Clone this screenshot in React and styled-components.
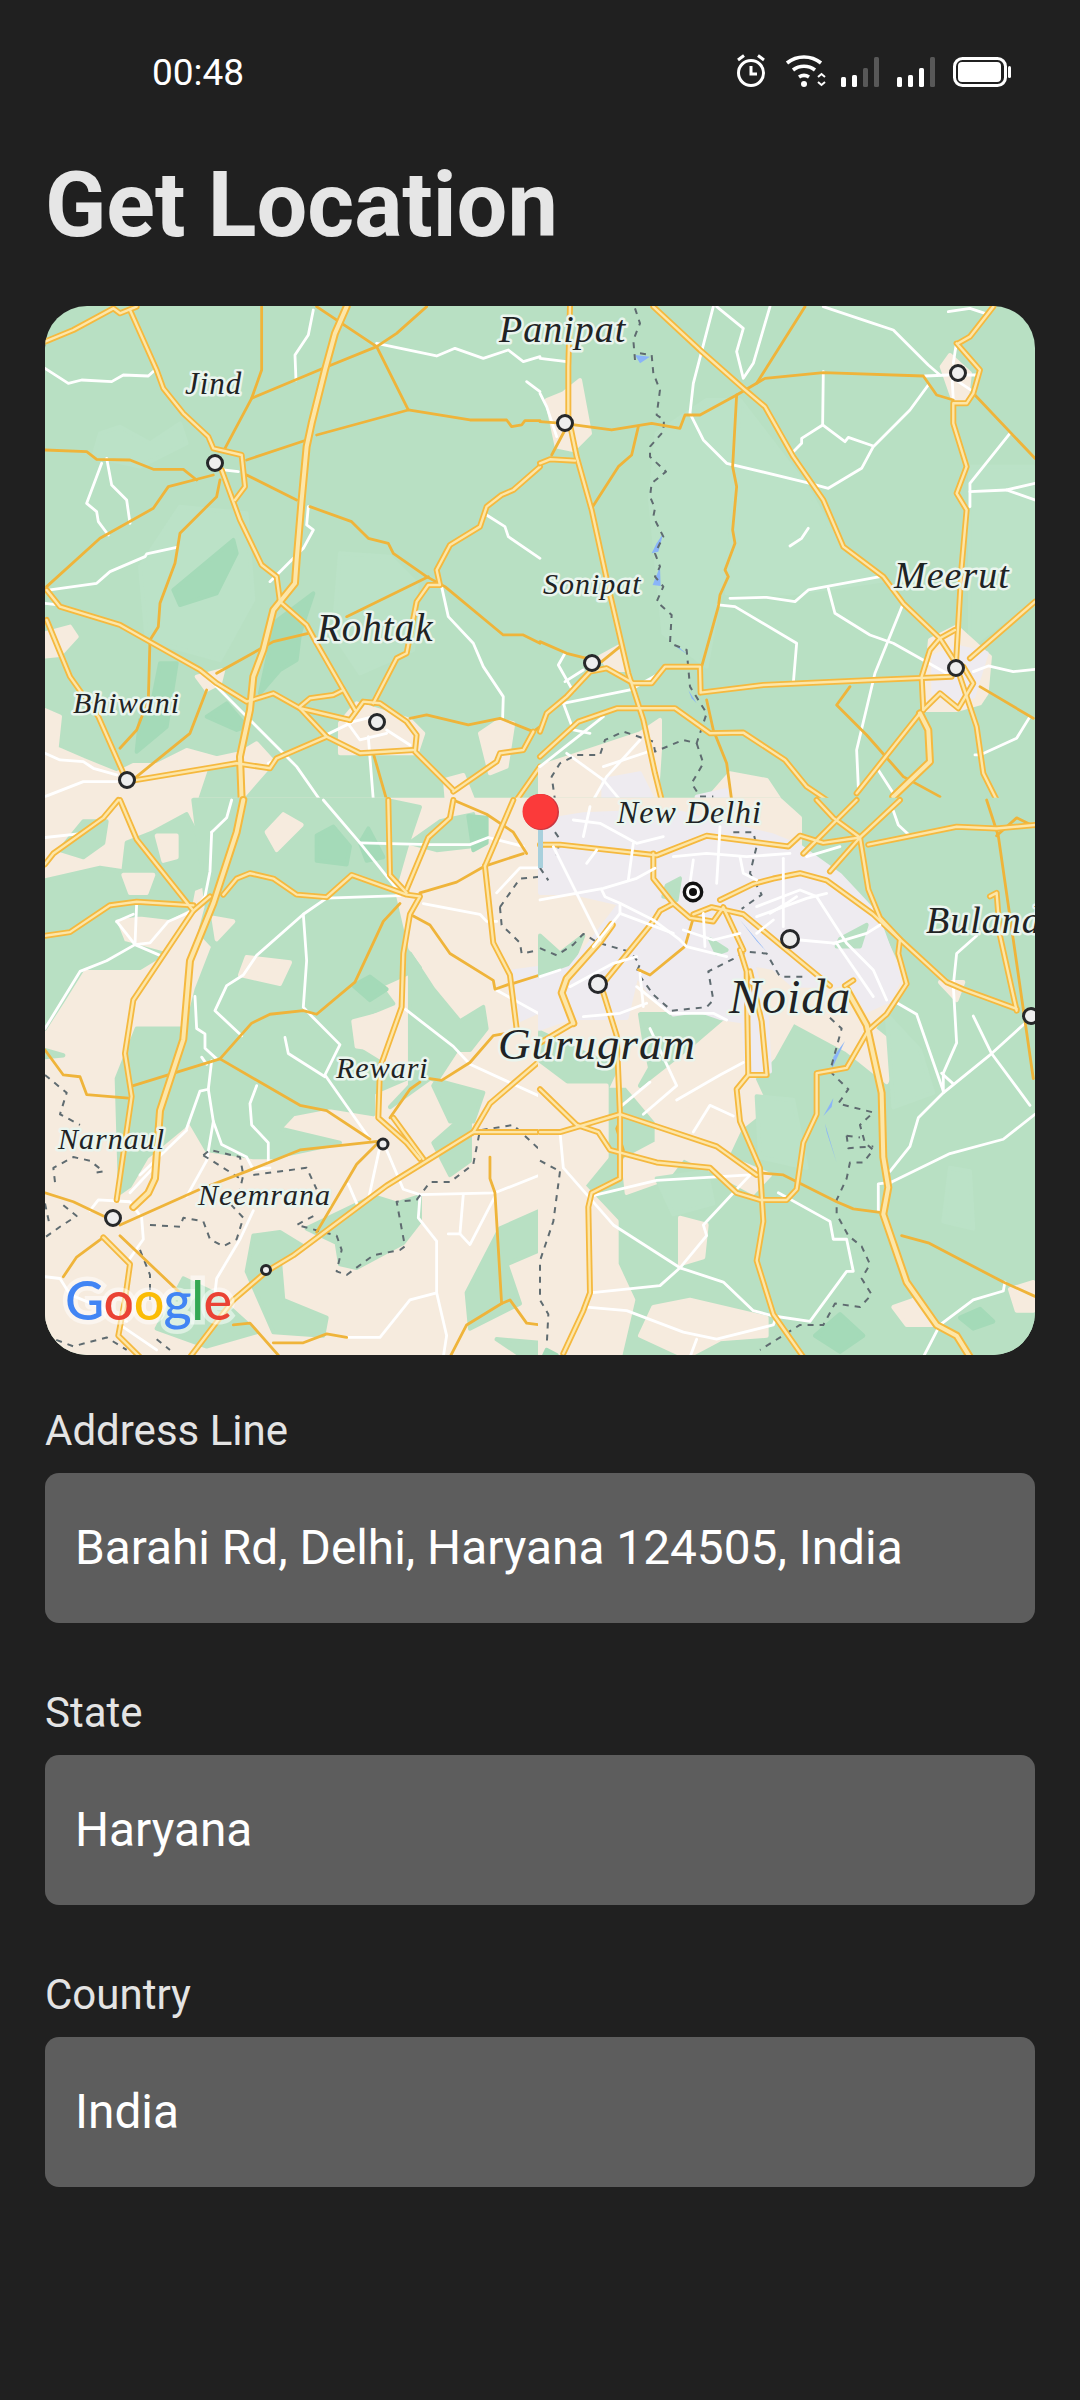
import React from 'react'
import styled, { createGlobalStyle } from 'styled-components'

const GlobalStyle = createGlobalStyle`
  html, body {
    margin: 0;
    padding: 0;
    background: #202020;
  }
`

const Screen = styled.div`
  width: 1080px;
  height: 2400px;
  box-sizing: border-box;
  padding: 0 45px;
  background: #202020;
  font-family: Roboto, "Noto Sans", sans-serif;
  overflow: hidden;
`

const StatusBar = styled.div`
  height: 144px;
  display: flex;
  align-items: center;
  justify-content: space-between;
  padding: 0 5px 0 107px;
`

const Clock = styled.span`
  font-size: 37px;
  color: #fff;
`

const StatusIcons = styled.svg`
  display: block;
`

const Title = styled.h1`
  margin: 0;
  height: 162px;
  font-size: 90px;
  line-height: 124px;
  font-weight: 700;
  color: #e6e6e6;
`

const MapCard = styled.div`
  width: 990px;
  height: 1049px;
  border-radius: 42px;
  overflow: hidden;
  background: #b8e0c3;
`

const MapSvg = styled.svg`
  display: block;
`

const Form = styled.div`
  display: flex;
  flex-direction: column;
  gap: 60px;
  padding-top: 46px;
`

const Field = styled.div`
  display: flex;
  flex-direction: column;
  gap: 12px;
`

const Label = styled.label`
  font-size: 42px;
  line-height: 60px;
  color: #e4e4e4;
`

const Value = styled.div`
  height: 150px;
  box-sizing: border-box;
  display: flex;
  align-items: center;
  padding: 0 30px;
  border-radius: 14px;
  background: #5d5d5d;
  font-size: 47.8px;
  color: #fff;
`

const GREEN = '#b8e0c3'
const GREEN_DARK = '#a4dab8'
const GREEN_LIGHT = '#bbe2c7'
const BEIGE = '#f6ebde'
const CITY = '#eeebf0'

// page coordinates come from zooms, so each quadrant keeps its own scale
const QUADS = {
  nw: 'translate(40 300) scale(0.3333 0.3333)',
  ne: 'translate(540 300) scale(0.3333 0.3333)',
  sw: 'translate(40 800) scale(0.3333 0.3571)',
  se: 'translate(540 800) scale(0.3333 0.3571)',
  delhi: 'translate(540 800) scale(0.3333 0.3333)',
}

const AREAS = {
  nw: [
    [GREEN_LIGHT, '300,800 420,620 620,640 640,900 540,1080 320,1020'],
    [GREEN_LIGHT, '900,760 1050,770 1130,850 1120,1050 960,1120 880,1000'],
    [GREEN_LIGHT, '180,400 240,380 330,430 420,370 440,430 300,500 160,470'],
    [BEIGE, '15,1000 90,980 110,1010 60,1065 15,1070'],
    [BEIGE, '15,1230 60,1250 50,1345 130,1380 230,1420 280,1395 350,1395 440,1350 530,1375 600,1360 650,1330 700,1385 600,1500 15,1500'],
    [BEIGE, '470,1130 550,1110 540,1150 500,1170'],
    [BEIGE, '900,1270 950,1210 1110,1260 1150,1300 1130,1360 900,1360'],
    [BEIGE, '1320,1300 1380,1260 1420,1270 1400,1400 1350,1420'],
    [BEIGE, '1215,1440 1270,1425 1300,1500 1220,1500'],
    [GREEN, '510,1410 600,1400 600,1500 480,1500'],
    [GREEN_DARK, '400,870 580,720 590,760 530,880 420,915'],
    [GREEN_DARK, '700,970 820,880 780,1000 770,1080 720,1110 660,1180 690,1040'],
    [GREEN_DARK, '360,1090 410,1090 380,1280 290,1355 300,1260 330,1240'],
    [GREEN_DARK, '500,1250 560,1210 620,1280 590,1290'],
  ],
  ne: [
    [GREEN_LIGHT, '500,300 590,300 580,700 540,880 500,1100 370,1000 330,600 350,400'],
    [GREEN_LIGHT, '600,300 800,560 900,740 1040,840 760,880 560,880'],
    [GREEN_LIGHT, '1290,500 1480,500 1480,900 1290,1040'],
    [BEIGE, '20,300 70,280 120,240 150,400 100,450 50,440'],
    [BEIGE, '180,1070 235,1040 255,1110 210,1110'],
    [BEIGE, '1205,200 1230,165 1290,220 1280,310 1240,300'],
    [BEIGE, '1170,1020 1250,980 1350,1070 1340,1180 1320,1210 1250,1230 1150,1230'],
    [CITY, '1180,1070 1250,1040 1340,1060 1300,1190 1240,1210 1180,1180'],
    [BEIGE, '0,1400 300,1300 360,1260 360,1350 350,1500 0,1500'],
    [BEIGE, '500,1500 570,1420 680,1440 720,1500'],
    [CITY, '190,1440 300,1420 340,1500 190,1500'],
    [CITY, '470,1490 560,1470 560,1500 470,1500'],
  ],
  sw: [
    [BEIGE, '15,0 1500,0 1500,1560 15,1560'],
    [GREEN, '15,225 180,190 250,200 260,120 340,90 440,40 490,130 540,220 460,250 450,300 390,330 300,320 220,330 250,400 370,430 300,470 130,470 70,560 15,640'],
    [GREEN, '130,60 200,60 190,120 130,160 60,140'],
    [GREEN, '460,0 1040,0 1140,20 1100,130 1060,260 1100,420 1140,470 1020,520 1060,570 930,620 960,700 1100,780 1000,820 1000,880 870,860 760,880 720,920 900,960 700,1000 640,1000 500,980 450,900 320,1000 270,1080 240,1100 230,780 290,640 330,640 440,640 470,530 520,410 480,370 500,300'],
    [BEIGE, '680,90 730,40 785,70 710,140'],
    [BEIGE, '620,440 750,455 720,515 600,490'],
    [BEIGE, '530,390 580,340 520,330'],
    [BEIGE, '350,100 410,100 410,160 370,170'],
    [BEIGE, '250,210 340,210 320,260 270,260'],
    [BEIGE, '940,620 1020,600 1090,650 1030,700 950,690'],
    [GREEN, '1110,430 1180,530 1260,620 1330,580 1340,640 1290,700 1250,700 1180,800 1230,900 1300,900 1330,820 1170,780 1050,860 1110,800'],
    [GREEN, '15,700 70,715 15,720'],
    [GREEN, '640,1220 720,1210 790,1250 720,1290 730,1400 860,1450 850,1500 700,1490 620,1320'],
    [GREEN, '1070,1130 1140,1110 1140,1180 1090,1240 950,1310 900,1300 890,1240 800,1200 1000,1110'],
    [GREEN, '1280,1380 1380,1200 1500,1150 1500,1260 1400,1300 1440,1410 1290,1480'],
    [GREEN, '350,1480 430,1340 520,1380 650,1490 500,1530'],
    [GREEN, '1290,870 1180,960 1230,1050 1290,1010'],
    [GREEN, '1110,120 1200,60 1300,40 1290,130 1190,140'],
    [GREEN, '1370,1510 1500,1520 1500,1560 1450,1560'],
    [CITY, '1420,480 1500,470 1500,590 1430,620'],
    [GREEN_DARK, '830,100 880,75 930,130 920,180 830,170'],
    [GREEN_DARK, '960,120 985,80 1030,160 980,170'],
    [GREEN_DARK, '1285,45 1340,50 1340,120 1300,140'],
    [GREEN_DARK, '940,520 990,495 1040,530 990,560'],
  ],
  se: [
    [GREEN, '0,0 1500,0 1500,1560 0,1560'],
    [BEIGE, '0,0 720,0 780,50 780,130 1000,320 1100,520 1000,640 1080,700 1040,790 920,700 760,620 700,720 640,780 680,860 600,920 560,1000 690,1050 640,1100 520,1040 430,1000 380,1060 260,1100 250,1010 350,960 350,900 260,800 0,800'],
    [GREEN, '0,380 60,430 130,380 80,500 0,520'],
    [GREEN, '390,470 440,460 500,480 500,590 400,590 320,520'],
    [GREEN, '300,600 400,600 550,610 450,690 300,800 330,750 310,660'],
    [GREEN, '230,750 190,830 100,800 0,730 0,650 160,720'],
    [CITY, '0,60 130,40 400,30 480,50 700,100 780,130 900,210 1010,320 1080,500 1050,560 980,590 930,510 880,520 760,520 700,470 640,460 680,600 690,760 620,760 610,620 540,610 480,590 400,600 330,540 290,490 260,610 210,610 90,610 0,640 0,500 90,470 150,400 240,290 100,260 0,260'],
    [GREEN, '510,390 560,420 530,430'],
    [GREEN, '380,240 420,220 410,280 370,270'],
    [GREEN, '900,390 980,350 960,410 890,410'],
    [BEIGE, '0,800 200,800 200,1000 130,1080 230,1180 230,1300 280,1400 240,1560 0,1560'],
    [BEIGE, '420,850 520,870 540,960 480,960'],
    [BEIGE, '340,1420 450,1400 680,1450 680,1500 540,1510 440,1560 300,1500'],
    [BEIGE, '420,1170 500,1190 490,1280 420,1300'],
    [BEIGE, '1060,1420 1120,1400 1180,1470 1100,1470'],
    [BEIGE, '1410,1370 1480,1350 1480,1430 1430,1430'],
    [BEIGE, '1200,510 1270,510 1250,560'],
    [GREEN_LIGHT, '350,1060 500,1040 520,1130 400,1160'],
    [GREEN_LIGHT, '650,830 760,840 800,1030 660,1000'],
    [GREEN_LIGHT, '1040,600 1140,700 1180,820 1060,860'],
    [GREEN_LIGHT, '1230,1030 1290,1040 1300,1200 1210,1180'],
    [GREEN_DARK, '825,1500 900,1440 970,1500 900,1545'],
    [GREEN_DARK, '1260,1450 1320,1425 1360,1460 1300,1480'],
    [GREEN_DARK, '20,1540 50,1555 10,1560'],
  ],
  delhi: [],
}

const ROADS = {
  nw: {
    major: [
      '920,20 885,100 855,210 815,370 800,440 785,600 770,780 765,850 700,930 670,1050 640,1130 630,1230 600,1370 605,1500',
    ],
    wide: [
      '270,30 350,210 370,265 430,340 505,410 520,445 605,465 615,560 585,600',
      '545,510 600,660 665,795 710,830 720,905 800,975 830,1030 945,1230',
      '15,125 100,90 220,25 240,40 290,20',
      '20,870 60,920 240,975 480,1110 530,1150 620,1205 700,1180 780,1225 860,1310 960,1360 1120,1350',
      '780,1225 930,1260',
      '780,1220 810,1195 880,1185 910,1170',
      '930,1260 970,1205 1020,1210 1100,1265 1130,1305 1125,1355 1240,1470',
      '20,960 90,1130 175,1250 250,1420',
      '260,1445 590,1390 690,1405 710,1375 860,1310',
      '1000,1210 1070,1075 1100,1060 1130,905 1165,855 1200,855 1190,810 1230,735 1320,680 1340,620 1385,585 1420,570 1500,500',
      '1480,1295 1450,1350 1380,1360 1370,1385 1240,1475',
      '1500,1400 1430,1500',
    ],
    thin: [
      '665,20 665,210 635,295 555,445',
      '635,295 850,205 1010,140 1070,100 1160,20',
      '830,20 1010,140 1105,330 830,405',
      '800,420 620,480',
      '1105,330 1290,360 1400,360 1415,380 1445,375 1455,362 1500,362',
      '15,450 140,455 170,478 270,480 340,508 430,508 470,540',
      '20,860 180,715 340,625 385,560 520,525',
      '540,540 530,590 420,700 405,790 360,910 355,980 330,1020 325,1200 290,1290 240,1345',
      '620,525 770,600',
      '810,620 935,665 985,715 1045,730 1060,760 1160,830 1215,860 1390,1005 1450,1005 1500,1030',
      '1165,830 920,950',
      '805,1000 700,1025 530,1120',
      '500,1170 450,1300 290,1430',
      '1110,1255 1160,1245 1285,1275 1380,1255 1480,1295 1500,1280',
      '1000,1360 1040,1500',
    ],
    minor: [
      '820,30 805,105 765,165 768,240',
      '1010,130 1190,168 1245,145 1330,175 1405,150 1450,185 1500,170',
      '15,205 85,250 125,240 215,245 250,225 325,228 345,210',
      '200,475 215,555 260,600 270,670',
      '185,490 140,610 170,635 175,665 205,705',
      '30,870 170,850 210,815 315,770 320,762 410,742',
      '805,620 800,675 820,690 790,745 720,815 690,845',
      '490,1120 640,1270 770,1400 840,1500',
      '15,1360 60,1380 130,1385 160,1405 230,1425',
      '15,1490 130,1445 230,1445',
      '1340,645 1395,680 1405,710 1500,775',
      '1205,860 1225,950 1300,1030 1330,1100 1390,1190 1388,1255',
      '1460,245 1500,275',
      '920,1265 960,1320 1040,1300',
      '685,1390 940,1265 1000,1250',
      '1040,1290 1110,1335',
      '985,1310 1000,1500',
      '550,510 595,515',
      '15,910 55,915',
    ],
    dashed: [],
    water: [],
  },
  ne: {
    major: [
      '1140,1240 1165,1290 1170,1385 1060,1490',
    ],
    wide: [
      '340,20 480,150 610,265 675,320 760,470 850,600 910,740 1030,830 1090,910 1200,1015 1245,1085',
      '90,20 85,200 85,350 110,470 155,630 205,860 265,1120 310,1260 345,1420 365,1500',
      '1250,130 1320,210 1300,280 1280,310 1240,310 1240,370 1280,500 1250,580 1280,630 1265,800 1248,1090',
      '1360,20 1290,110 1255,130',
      '0,490 30,478 105,482',
      '0,1295 20,1240 80,1190 150,1115 200,1105 280,1150 335,1150 375,1100 480,1100 482,1178 670,1155 1000,1140 1235,1130',
      '0,1370 115,1265 230,1225 405,1225 510,1300 610,1298 735,1380 800,1460 860,1500',
      '1140,1240 950,1480',
      '1150,1230 1145,1130 1170,1050 1200,1015 1245,990',
      '1150,1230 1200,1180 1255,1225 1300,1150 1270,1100',
      '1290,1075 1485,905',
      '1260,1130 1310,1280 1330,1420 1370,1500',
    ],
    thin: [
      '1320,1160 1480,1255',
      '0,1025 80,1060 140,1075',
      '185,1085 240,1040',
      '0,365 70,370 215,390 335,370 420,385 435,345 480,345 590,285 650,250 675,235 850,218 1150,228 1190,285 1240,300',
      '650,250 795,20',
      '590,285 578,500 590,560 578,690 585,730 555,810 565,830 540,885 535,920 485,1100',
      '295,380 275,465 235,500 155,625',
      '35,465 75,390',
      '1300,280 1485,475',
      '930,1160 890,1215 980,1305 1090,1430 1200,1490',
      '500,1200 520,1290 560,1390 575,1500',
    ],
    minor: [
      '520,20 460,250 450,340 490,420 560,490 810,550 865,565 965,505 1000,440 1110,330 1165,255',
      '530,20 610,85 590,155 610,235 640,190 690,20',
      '850,215 848,375 785,415 785,430 760,455',
      '848,375 915,425 925,412 1000,438',
      '850,20 1000,70 1060,90 1165,195 1200,225',
      '1155,228 1225,225',
      '1225,35 1290,25 1335,40',
      '1235,210 1240,300',
      '1250,125 1240,190',
      '1255,245 1300,275',
      '1280,225 1310,225',
      '1410,400 1290,550 1290,620',
      '1290,575 1400,570 1485,600',
      '1400,570 1485,550',
      '805,685 785,715 750,738',
      '570,895 680,892 765,905 805,870 1020,830',
      '865,865 885,940 990,1005 1060,1030 1220,1120',
      '1090,910 1005,1120 950,1350 955,1460',
      '535,915 585,920 770,1030 760,1150',
      '1300,1115 1345,1098 1420,1115 1485,1108',
      '1470,1250 1430,1315 1320,1365 1305,1365',
      '1015,1410 1060,1480',
      '0,175 80,185',
      '0,280 20,320 50,410',
      '75,1060 55,1095 100,1175',
      '75,1145 130,1110',
      '70,1210 270,1170 360,1120',
      '70,1210 100,1290 150,1300',
      '0,1400 190,1250',
      '300,1320 200,1430 160,1500',
      '80,1360 190,1440 240,1500',
      '190,1400 340,1350',
    ],
    dashed: [
      '285,25 300,70 280,120 285,180',
      '300,160 335,165 340,220 360,270 350,345 372,360 370,395 330,440 330,470 378,515 335,550 330,590 345,625 340,650 370,710 345,760 360,800 345,830 370,860 350,905 395,945 390,1030 440,1050 450,1160 500,1240 470,1330 430,1320 345,1355 340,1325 250,1295 195,1320 180,1365 110,1365 60,1390 35,1430 45,1500',
      '470,1330 490,1390 455,1450 480,1490 520,1490',
    ],
    water: [
      '285,165 330,170 300,190',
      '370,700 355,755 335,760 350,730',
      '360,800 362,858 338,855',
      '400,1035 445,1065 420,1045',
      '445,1170 470,1210 455,1195',
    ],
  },
  sw: {
    major: [
      '610,0 590,90 520,290 450,450 430,670 360,870 345,1060 325,1100 280,1140',
    ],
    wide: [
      '240,0 290,110 460,310 510,270',
      '460,310 280,560 255,710 275,830 230,1120',
      '15,380 90,370 210,295 290,285 460,295',
      '15,180 40,150 130,90 190,50 235,0',
      '550,265 590,220 630,205 700,220 770,265 860,272 935,210 1100,265 1140,270 1110,320 1090,430 1085,580 1020,750 1015,890 1100,960 1140,1005',
      '1045,0 1050,210 1100,260',
      '1100,250 1165,105 1230,50 1240,0',
      '1335,185 1420,0',
      '1335,185 1360,400 1410,490 1430,640',
      '580,1400 680,1320 760,1275 1040,1080 1300,930 1500,930',
      '1300,930 1350,850 1500,730',
      '1060,890 1150,1005',
      '190,1225 270,1300 255,1400 235,1500 300,1560',
      '450,1560 580,1400',
    ],
    thin: [
      '1140,260 1250,230 1335,185 1450,150',
      '1240,0 1340,40 1420,90 1460,150',
      '1120,325 1170,350 1230,430 1360,505 1365,530 1410,515',
      '1415,515 1500,490',
      '280,800 540,725 635,625 690,600 790,590 830,600 945,510 1030,340 1080,290',
      '540,725 780,855 860,870 990,950',
      '15,700 70,770 120,775 140,825 265,835',
      '240,1190 480,1090 620,1040 780,980 1020,955',
      '1020,955 950,1020 830,1210',
      '1050,890 1110,810 1140,790',
      '1170,780 1205,785 1290,735 1360,660 1420,650',
      '15,1100 100,1125 190,1165',
      '190,1225 110,1280 70,1335',
      '240,1220 420,1380',
      '1350,1000 1350,1060 1365,1100 1385,1410 1280,1470 1230,1560',
      '1385,1410 1410,1400 1460,1465 1500,1470',
      '580,1470 630,1465 720,1560',
      '700,1520 790,1520 860,1495 920,1505',
    ],
    minor: [
      '15,105 115,95',
      '15,640 120,480 200,450 285,405 360,435',
      '285,405 330,400 385,340 470,305',
      '290,290 285,405',
      '230,340 285,405',
      '280,320 230,340',
      '515,90 510,200 495,270 470,300',
      '575,0 560,50 515,90',
      '850,0 960,120 1080,260',
      '960,120 1170,125 1290,125 1345,105 1450,130',
      '1080,268 860,275 790,320 650,435 610,490 560,520 525,590 605,660',
      '790,320 800,450 790,580 820,610 900,685 855,770 990,950',
      '735,665 745,710 855,775',
      '465,550 470,640 495,655 495,695 530,725',
      '485,720 500,740',
      '515,730 505,810 520,900 545,965 620,1000 640,1035 690,1030',
      '505,810 480,815 440,920',
      '520,900 500,1010 440,1110',
      '650,800 630,850 635,910 685,960 685,1010',
      '640,1150 600,1230 530,1340 525,1380',
      '1095,585 1240,690 1290,740 1500,830',
      '1040,980 1090,1090 1140,1105 1365,1100 1500,1050',
      '1020,970 985,1120',
      '925,1075 955,1140',
      '1140,1110 1135,1170 1190,1235 1190,1380 1220,1500 1210,1560',
      '1190,1380 1110,1400 1020,1505 920,1505',
      '1270,1105 1260,1215 1290,1245 1365,1110',
      '1225,1215 1260,1215',
      '1150,290 1320,320 1340,340 1370,340',
      '1365,530 1500,600',
      '1370,260 1440,190 1500,190',
      '15,1335 60,1340 90,1385 180,1420 260,1460',
      '240,1470 350,1540',
      '150,1150 175,1120 270,1125 305,1170 310,1230 265,1290',
      '440,925 300,1050',
      '350,1020 270,1100',
    ],
    dashed: [
      '15,770 80,820 60,880 120,910',
      '45,1070 40,1030 100,1000 150,1010 190,1040 155,1045',
      '70,1135 110,1165 60,1195 15,1225',
      '15,1130 30,1195',
      '300,1260 330,1330 330,1400',
      '330,1190 420,1195 430,1170 490,1180 510,1230 550,1250 590,1230 610,1170 570,1130',
      '490,995 510,980 600,1000 610,1050 600,1090',
      '490,995 550,1030 600,1060',
      '640,1050 800,1030 830,1090',
      '820,1165 770,1190 890,1220 905,1260 890,1320 920,1330 1000,1275 1080,1260 1095,1250 1070,1125 1130,1120 1170,1070 1230,1070 1300,1020 1320,925 1420,910 1500,980',
      '1380,300 1385,350 1440,400 1445,430 1500,420',
      '1380,300 1440,220 1500,215',
      '15,1500 100,1530 200,1505 260,1540',
      '350,1510 390,1540',
    ],
    water: [],
  },
  se: {
    major: [
      '920,530 980,630 1025,820 1030,1000 1045,1085 1030,1160 1100,1350 1190,1470 1250,1500 1290,1560',
      '215,350 180,395 80,500 65,540 100,625',
    ],
    wide: [
      '0,125 60,125 350,155 500,100 745,130 780,100 850,120 960,105',
      '960,105 985,250 1020,330 1080,390 1075,430 1100,515 1040,600 985,645 920,750 830,765 830,880 790,960 770,1090 740,1120 660,1120 590,1100 510,1030 350,1015 210,980 175,930 110,910 0,810',
      '870,520 740,420 610,320 515,300 460,320',
      '540,280 640,235 700,220 780,205 860,225 1000,320 1080,390 1220,510 1270,530 1430,585',
      '940,505 915,520',
      '600,420 620,480 625,770 590,810 600,900 660,1030 670,1180 650,1290 700,1440 790,1560',
      '630,480 665,620 680,770 625,770',
      '100,625 0,680',
      '175,530 340,340 360,310 400,290',
      '340,150 340,220 400,290 450,330 520,340 550,300 610,420',
      '190,540 230,660 240,880 240,1060 155,1100 145,1140 150,1380 130,1430 70,1550',
      '240,880 530,970 650,1050',
      '240,880 60,930 0,930',
      '1350,270 1370,260 1380,380 1430,590',
      '830,0 880,50 960,105',
      '1080,0 960,105 870,200',
      '950,0 790,150',
      '985,125 1250,75 1370,80 1485,70',
    ],
    thin: [
      '460,330 435,410 330,490 295,475',
      '665,1045 730,1050 890,1125 940,1145 1020,1155',
      '1085,1220 1165,1240 1390,1350 1485,1390',
      '240,900 230,920 250,980 235,1060',
      '1340,0 1375,100 1480,780',
      '1370,100 1430,50 1485,75',
    ],
    minor: [
      '410,840 540,770 610,735',
      '310,880 410,800 330,640',
      '240,860 330,790',
      '460,930 510,855 580,885',
      '150,1110 350,1065 630,1050',
      '60,930 70,1030 220,1190 420,1310 360,1360 150,1380',
      '420,1310 500,1220 490,1190 630,1050',
      '420,1310 550,1350 640,1430 700,1445 810,1460 920,1320 940,1320 920,1230 880,1230 870,1180 715,1100',
      '140,1420 260,1430 430,1490 530,1510 700,1470 710,1445',
      '450,1560 470,1510',
      '1055,1070 1230,990 1390,950 1485,880',
      '1050,1040 1110,970 1135,890 1210,820 1355,710 1485,600',
      '1210,820 1210,765 1250,680 1240,520',
      '1300,605 1355,710 1470,855',
      '1240,795 1205,765',
      '1065,565 1130,600 1210,815',
      '1015,1150 1015,1075 1055,1070',
      '1395,1350 1390,1375 1300,1400 1200,1470 1150,1560',
      '1240,520 1250,430 1310,380',
      '1060,30 1075,70 1110,100',
    ],
    dashed: [
      '0,190 25,225',
      '45,90 60,110 50,155',
      '580,90 640,90 650,130 630,205 665,265 605,305',
      '0,415 50,435 100,405 130,375 175,400 270,425 300,460 290,480 340,545 395,590 500,580 520,560 505,480 580,445 620,425 680,430 720,495 800,495',
      '870,610 905,640 870,760 925,810 895,850 1000,875 960,910 975,960 1000,980 970,1015 930,1015 920,1060 890,1120 890,1160 925,1220 965,1250 990,1300 965,1340 995,1385 960,1420 885,1410 850,1470 780,1470 660,1540',
      '920,940 960,945',
      '920,940 925,975 1000,970',
      '60,1040 40,1180 0,1290 0,1400 25,1440 20,1530',
      '0,1010 60,1040',
    ],
    water: [
      '600,335 680,425 650,395',
      '915,675 880,720 875,755',
      '880,835 850,885 875,860',
      '855,905 890,1015 860,930',
    ],
  },
  delhi: {
    major: [],
    wide: [],
    thin: [],
    minor: [
      '150,20 130,110',
      '140,190 170,150',
      '40,140 110,280 180,420',
      '0,300 190,265 290,235 345,205',
      '280,130 265,240',
      '185,270 195,290 240,310 240,340 160,440',
      '240,310 340,360 420,420 440,440 560,470',
      '240,340 400,400',
      '460,180 450,250',
      '540,80 535,170 530,250',
      '600,170 610,220 650,240',
      '730,175 730,380',
      '650,320 780,270 830,290 920,430 1000,510 1040,600',
      '650,350 800,295 860,280',
      '780,420 890,430 1000,590',
      '880,430 980,400 1020,375',
      '0,530 60,510',
      '90,560 220,490 290,470',
      '130,650 240,640 320,610',
      '300,520 310,620',
      '290,560 390,640 520,640 560,660',
      '400,170 500,160 620,170 750,160',
      '800,170 900,140',
      '430,390 520,420 600,400',
      '490,340 495,440',
      '690,340 740,310 770,290',
      '650,400 700,360',
      '100,60 180,70 290,130 370,110',
    ],
    dashed: [],
    water: [],
  },
}

const LABELS = [
  { text: 'Panipat', x: 499, y: 342, size: 38 },
  { text: 'Jind', x: 185, y: 394, size: 31 },
  { text: 'Rohtak', x: 317, y: 641, size: 39 },
  { text: 'Sonipat', x: 543, y: 594, size: 30 },
  { text: 'Meerut', x: 894, y: 588, size: 38 },
  { text: 'Bhiwani', x: 73, y: 713, size: 30 },
  { text: 'New Delhi', x: 617, y: 823, size: 32 },
  { text: 'Buland', x: 926, y: 933, size: 38 },
  { text: 'Noida', x: 729, y: 1013, size: 48 },
  { text: 'Gurugram', x: 498, y: 1059, size: 45 },
  { text: 'Rewari', x: 336, y: 1078, size: 30 },
  { text: 'Narnaul', x: 58, y: 1149, size: 30 },
  { text: 'Neemrana', x: 198, y: 1205, size: 30 },
]

const PLACES = [
  { x: 215, y: 463, r: 7.5 },
  { x: 377, y: 722, r: 7.5 },
  { x: 127, y: 780, r: 7.5 },
  { x: 565, y: 423, r: 7.5 },
  { x: 592, y: 663, r: 7.5 },
  { x: 958, y: 373, r: 7.5 },
  { x: 956, y: 668, r: 7.5 },
  { x: 790, y: 939, r: 8.5 },
  { x: 598, y: 984, r: 8.5 },
  { x: 1031, y: 1016, r: 7.5 },
  { x: 113, y: 1218, r: 7.5 },
  { x: 383, y: 1144, r: 5 },
  { x: 266, y: 1270, r: 4.5 },
]

const pointsToPath = points => `M${points.split(' ').join('L')}`

const Line = ({ points, color, width, ...rest }) => (
  <path d={pointsToPath(points)} stroke={color} strokeWidth={width} vectorEffect="non-scaling-stroke" {...rest} />
)

const Quadrant = ({ name }) => {
  const roads = ROADS[name]
  const wideRoads = [...roads.wide, ...roads.major]
  return (
    <g transform={QUADS[name]} fill="none" strokeLinejoin="round" strokeLinecap="round">
      {AREAS[name].map(([color, points]) => (
        <polygon key={points} points={points} fill={color} stroke={color} strokeWidth="12" />
      ))}
      {roads.water.map(points => (
        <polygon key={points} points={points} fill="#8ab4f8" />
      ))}
      {roads.minor.map(points => (
        <Line key={points} points={points} color="#fff" width="2.8" />
      ))}
      {roads.dashed.map(points => (
        <Line key={points} points={points} color="#5f6b70" width="2" strokeDasharray="6 6" strokeLinecap="butt" />
      ))}
      {roads.thin.map(points => (
        <Line key={points} points={points} color="#efb43a" width="2.8" />
      ))}
      {wideRoads.map(points => (
        <Line key={points} points={points} color="#f5b93f" width={roads.major.includes(points) ? 8 : 6} />
      ))}
      {wideRoads.map(points => (
        <Line key={`${points}-inner`} points={points} color="#fde6a8" width={roads.major.includes(points) ? 4 : 2.4} />
      ))}
    </g>
  )
}

const RoadMap = () => (
  <MapSvg width="990" height="1049" viewBox="45 306 990 1049">
    <Quadrant name="nw" />
    <Quadrant name="ne" />
    <Quadrant name="sw" />
    <Quadrant name="se" />
    <Quadrant name="delhi" />
    {PLACES.map(({ x, y, r }) => (
      <circle key={`${x}-${y}`} cx={x} cy={y} r={r} fill="#eeeeee" stroke="#26282a" strokeWidth="3" />
    ))}
    <circle cx="693" cy="892" r="8.7" fill="#fff" stroke="#111" strokeWidth="3.4" />
    <circle cx="693" cy="892" r="4" fill="#111" />
    <g fontFamily='"Liberation Serif", serif' fontStyle="italic" fill="#1f2324" stroke="#eaf5ee" strokeWidth="5" paintOrder="stroke" strokeLinejoin="round">
      {LABELS.map(({ text, x, y, size }) => (
        <text key={text} x={x} y={y} fontSize={size} letterSpacing="1">
          {text}
        </text>
      ))}
    </g>
    <rect x="538" y="826" width="5" height="42" fill="#a8d0dc" />
    <circle cx="541" cy="812" r="18" fill="#c93540" />
    <circle cx="540" cy="811.500" r="17.500" fill="#fb3a3a" />
    <text x="65" y="1320" fontFamily="Lato, sans-serif" fontSize="54" fontWeight="500" stroke="#fff" strokeOpacity="0.5" strokeWidth="9" paintOrder="stroke" letterSpacing="-0.6">
      <tspan fill="#4285f4">G</tspan>
      <tspan fill="#ea4335">o</tspan>
      <tspan fill="#fbbc05">o</tspan>
      <tspan fill="#4285f4">g</tspan>
      <tspan fill="#34a853">l</tspan>
      <tspan fill="#ea4335">e</tspan>
    </text>
  </MapSvg>
)

const BAR_HEIGHTS = [10, 12, 19, 30]

const Bars = ({ x, lit }) => (
  <g fill="#fff">
    {BAR_HEIGHTS.map((h, i) => (
      <rect key={i} x={x + i * 11} y={87 - h} width="5" height={h} rx="1.500" fillOpacity={i < lit ? 1 : 0.25} />
    ))}
  </g>
)

const Status = () => (
  <StatusIcons width="300" height="40" viewBox="730 52 300 40">
    <g fill="none" stroke="#fff" strokeWidth="3">
      <circle cx="751" cy="73" r="12.500" />
      <path d="M751 66v8h6M738 60l6-4.500M764 60l-6-4.500" />
      <path d="M787 63a27 27 0 0 1 34 0M793 70a18 18 0 0 1 22 0M799 77a9 9 0 0 1 10 0" strokeWidth="3.600" />
      <path d="M818 77l3.500-3 3.500 3M818 82l3.500 3 3.500-3" strokeWidth="2" />
    </g>
    <circle cx="804" cy="84" r="3" fill="#fff" />
    <Bars x={841} lit={2} />
    <Bars x={897} lit={3} />
    <rect x="954.500" y="58.500" width="51" height="27" rx="8" fill="none" stroke="#fff" strokeWidth="3" />
    <rect x="958" y="62" width="43" height="20" rx="4" fill="#fff" />
    <rect x="1008" y="66" width="3" height="12" rx="1.500" fill="#fff" />
  </StatusIcons>
)

const FIELDS = [
  { label: 'Address Line', value: 'Barahi Rd, Delhi, Haryana 124505, India' },
  { label: 'State', value: 'Haryana' },
  { label: 'Country', value: 'India' },
]

const App = () => (
  <Screen>
    <GlobalStyle />
    <StatusBar>
      <Clock>00:48</Clock>
      <Status />
    </StatusBar>
    <Title>Get Location</Title>
    <MapCard>
      <RoadMap />
    </MapCard>
    <Form>
      {FIELDS.map(({ label, value }) => (
        <Field key={label}>
          <Label>{label}</Label>
          <Value>{value}</Value>
        </Field>
      ))}
    </Form>
  </Screen>
)

export default App
